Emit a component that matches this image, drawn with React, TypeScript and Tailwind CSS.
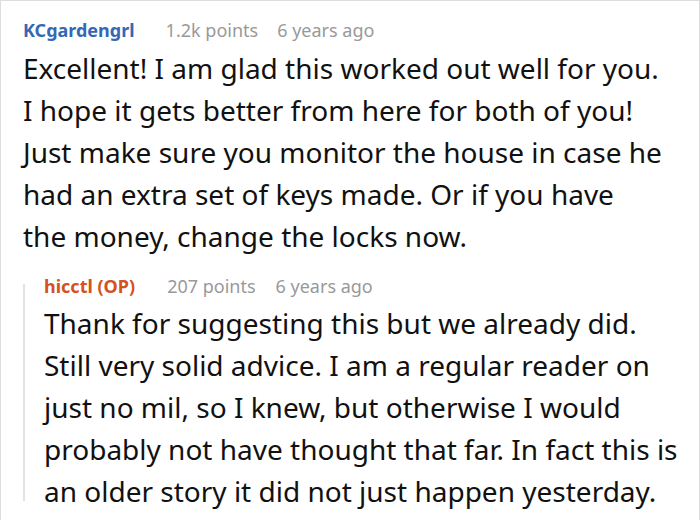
export default function App() {
  return (
    <div
      className="w-[700px] h-[520px] overflow-hidden bg-white border-t border-l border-r border-[#dddddd] text-[#111111]"
      style={{ fontFamily: '"Noto Sans", "Open Sans", sans-serif' }}
    >
      <div className="pl-[22px] pt-[15px]">
        <div className="flex items-center h-[28px] text-[18px]">
          <span className="font-bold text-[#3568b4]">KCgardengrl</span>
          <span className="ml-[31px] text-[#999999]">1.2k points</span>
          <span className="ml-[19px] text-[#999999]">6 years ago</span>
        </div>
        <p className="mt-[3px] text-[28px] leading-[42px]">
          Excellent! I am glad this worked out well for you.
          <br />
          I hope it gets better from here for both of you!
          <br />
          Just make sure you monitor the house in case he
          <br />
          had an extra set of keys made. Or if you have
          <br />
          the money, change the locks now.
        </p>
        <div className="mt-[15px] flex">
          <div className="w-[2px] bg-[#e3e3e3] mt-[12px] mb-[11px]" />
          <div className="pl-[19px]">
            <div className="flex items-center h-[28px] text-[18px]">
              <span className="font-bold text-[#d4521f]">hicctl (OP)</span>
              <span className="ml-[32px] text-[#999999]">207 points</span>
              <span className="ml-[20px] text-[#999999]">6 years ago</span>
            </div>
            <p className="mt-[2px] text-[28px] leading-[42px]">
              Thank for suggesting this but we already did.
              <br />
              Still very solid advice. I am a regular reader on
              <br />
              just no mil, so I knew, but otherwise I would
              <br />
              probably not have thought that far. In fact this is
              <br />
              an older story it did not just happen yesterday.
            </p>
          </div>
        </div>
      </div>
    </div>
  );
}
